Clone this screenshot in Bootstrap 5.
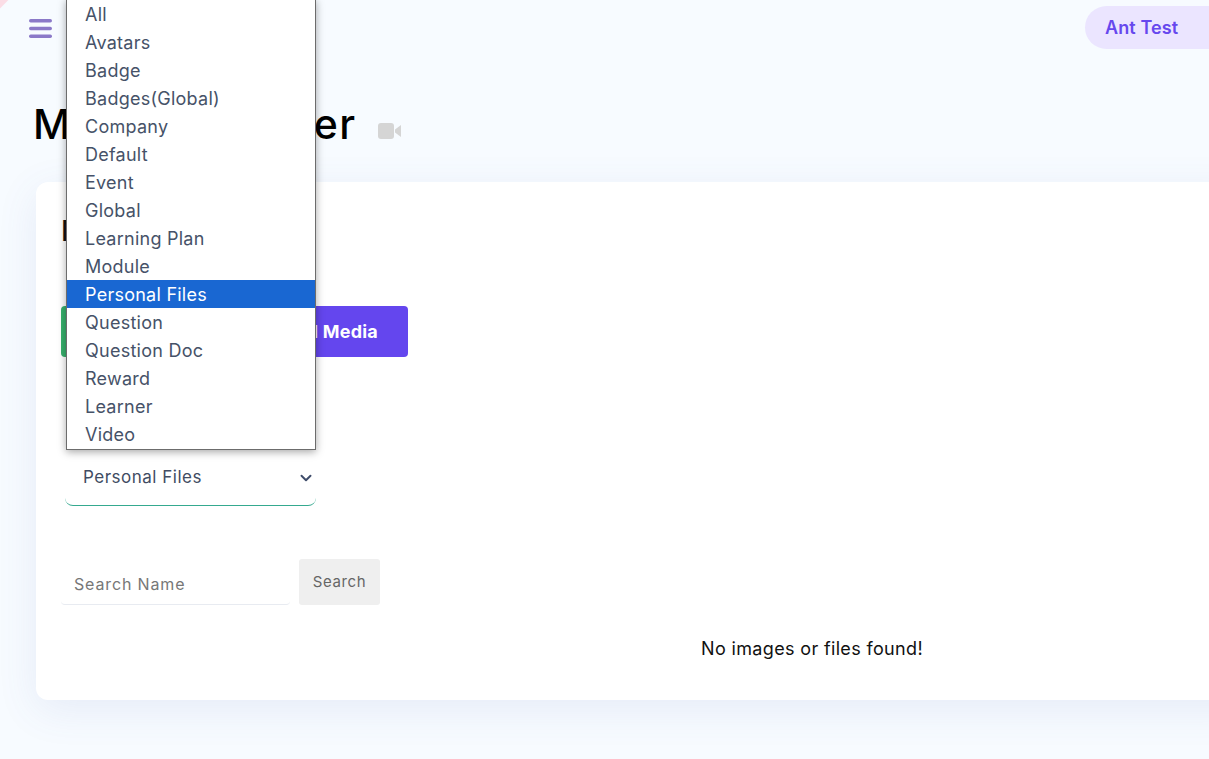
<!DOCTYPE html>
<html lang="en">
<head>
<meta charset="utf-8">
<title>Media Manager</title>
<link href="https://cdn.jsdelivr.net/npm/bootstrap@5.3.0/dist/css/bootstrap.min.css" rel="stylesheet">
<style>
html,body{height:100%;}
body{font-family:"Inter","Liberation Sans",sans-serif;background:#f7fbff;overflow:hidden;color:#111;position:relative;}
.corner-tint{position:absolute;left:-18px;top:-18px;width:26px;height:26px;background:#fbdde6;transform:rotate(45deg);}
.top-strip{height:57px;padding-left:29px;}
.burger{display:block;width:23px;height:19px;}
.user-pill{margin-top:-2px;width:124px;height:43px;padding-left:20px;border-radius:22px 0 0 22px;background:#ebe5ff;color:#6648ee;font-size:18px;font-weight:600;letter-spacing:.1px;display:flex;align-items:center;}
.page-title{font-size:41px;font-weight:500;color:#000;margin:43px 0 0 33px;line-height:48px;letter-spacing:1.4px;}
.cam-icon{width:24px;height:16px;margin:14px 0 0 21px;}
.main-panel{background:#fff;margin:34px -40px 0 36px;height:518px;border-radius:12px;padding:32px 26px 0 25px;box-shadow:0 10px 40px rgba(80,100,180,.1);}
.panel-heading{font-size:28px;font-weight:500;line-height:34px;margin:0;}
.media-btns{margin-top:58px;}
.btn-green,.btn-purple{height:51px;border:0;border-radius:4px;color:#fff;font-size:18px;font-weight:700;padding:0;}
.btn-green{width:110px;background:#37b06c;}
.btn-purple{width:237px;background:#6446ee;text-align:right;padding-right:30px;letter-spacing:.2px;}
.select-wrap{position:relative;width:251px;margin:93px 0 0 4px;}
.type-select{height:56px;border:0;border-bottom:1px solid #35a98f;border-radius:0 0 8px 8px;color:#414c63;font-size:17px;letter-spacing:.5px;padding-left:18px;box-shadow:none;background-position:right 2px center;background-size:16px 12px;background-image:url("data:image/svg+xml,%3csvg xmlns='http://www.w3.org/2000/svg' viewBox='0 0 16 16'%3e%3cpath fill='none' stroke='%233f4d6b' stroke-linecap='round' stroke-linejoin='round' stroke-width='2.6' d='m2 5 6 6 6-6'/%3e%3c/svg%3e");}
.option-menu{position:absolute;left:1px;bottom:56px;width:250px;background:#fff;border:1px solid #6c6c6c;box-shadow:0 2px 8px rgba(0,0,0,.35);margin:0;padding:0 0 1px;list-style:none;font-size:18px;letter-spacing:.25px;color:#465268;}
.option-menu li{height:28px;line-height:30px;padding-left:18px;white-space:nowrap;}
.option-menu li.is-picked{background:#1967d2;color:#fff;}
.search-row{margin-top:53px;align-items:flex-end;}
.search-field{width:229px;height:42px;border:0;border-bottom:1px solid #e8ebf1;border-radius:0 0 4px 4px;padding:0 13px;font-size:16px;letter-spacing:.85px;color:#555;box-shadow:none;}
.search-field::placeholder{color:#777;}
.search-btn{width:81px;height:46px;margin-left:9px;background:#efefef;border:0;border-radius:3px;color:#666;font-size:15px;letter-spacing:.6px;padding:0;}
.no-results{font-size:18px;color:#111;text-align:center;margin:30px 0 0;padding-left:329px;letter-spacing:.35px;}
.result-box{width:1173px;}
</style>
</head>
<body>
<div class="corner-tint"></div>
<header class="d-flex justify-content-between align-items-center top-strip">
  <svg class="burger" viewBox="0 0 23 19" aria-hidden="true"><g fill="#8b79c8"><rect y="0" width="23" height="3.4" rx="1.7"/><rect y="7.8" width="23" height="3.4" rx="1.7"/><rect y="15.6" width="23" height="3.4" rx="1.7"/></g></svg>
  <div class="user-pill">Ant Test</div>
</header>
<h1 class="page-title d-flex align-items-center">Media Manager
  <svg class="cam-icon" viewBox="0 0 24 16" aria-hidden="true"><rect width="16" height="16" rx="3" fill="#d5d5d5"/><path d="M17 6.5l6-4.5v12l-6-4.5z" fill="#d5d5d5"/></svg>
</h1>
<main class="main-panel">
  <h2 class="panel-heading">Media</h2>
  <div class="media-btns d-flex">
    <button class="btn-green" type="button">Upload</button>
    <button class="btn-purple" type="button">Add Media</button>
  </div>
  <div class="select-wrap">
    <ul class="option-menu">
      <li>All</li><li>Avatars</li><li>Badge</li><li>Badges(Global)</li><li>Company</li><li>Default</li><li>Event</li><li>Global</li><li>Learning Plan</li><li>Module</li><li class="is-picked">Personal Files</li><li>Question</li><li>Question Doc</li><li>Reward</li><li>Learner</li><li>Video</li>
    </ul>
    <select class="form-select type-select" aria-label="Type"><option>Personal Files</option></select>
  </div>
  <div class="search-row d-flex">
    <input class="form-control search-field" type="text" placeholder="Search Name">
    <button class="search-btn" type="button">Search</button>
  </div>
  <div class="result-box"><p class="no-results">No images or files found!</p></div>
</main>
<script src="https://cdn.jsdelivr.net/npm/bootstrap@5.3.0/dist/js/bootstrap.bundle.min.js"></script>
</body>
</html>
